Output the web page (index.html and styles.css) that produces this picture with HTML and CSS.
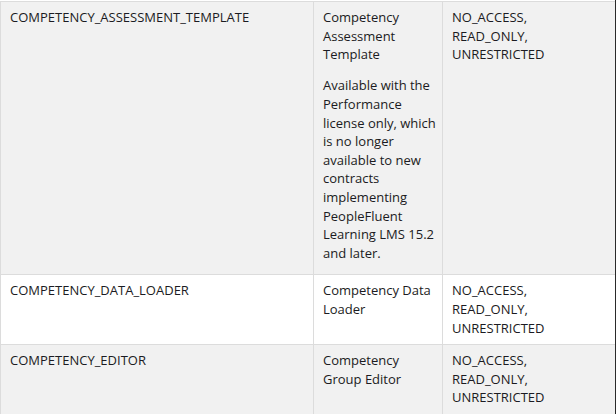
FILE: index.html
```html
<!DOCTYPE html>
<html>
<head>
<meta charset="utf-8">
<link rel="stylesheet" href="styles.css">
</head>
<body>
<div class="frame">
  <table class="perm-table">
    <colgroup>
      <col class="c1">
      <col class="c2">
      <col class="c3">
    </colgroup>
    <tbody>
      <tr class="row-alt">
        <td>COMPETENCY_ASSESSMENT_TEMPLATE</td>
        <td class="desc">
          <p class="para">Competency Assessment Template</p>
          <p class="para para-last">Available with the Performance license only, which is no longer available to new contracts implementing PeopleFluent Learning LMS 15.2 and later.</p>
        </td>
        <td>NO_ACCESS,<br>READ_ONLY,<br>UNRESTRICTED</td>
      </tr>
      <tr class="row-plain">
        <td>COMPETENCY_DATA_LOADER</td>
        <td class="desc">Competency Data Loader</td>
        <td>NO_ACCESS,<br>READ_ONLY,<br>UNRESTRICTED</td>
      </tr>
      <tr class="row-alt">
        <td>COMPETENCY_EDITOR</td>
        <td class="desc">Competency Group Editor</td>
        <td>NO_ACCESS,<br>READ_ONLY,<br>UNRESTRICTED</td>
      </tr>
    </tbody>
  </table>
</div>
</body>
</html>
```

FILE: styles.css
```css
html, body {
  margin: 0;
  padding: 0;
  background: #ffffff;
}

.frame {
  width: 615px;
  height: 414px;
  overflow: hidden;
  border-right: 1px solid #2a2a2a;
  padding-top: 1px;
  box-sizing: content-box;
}

.perm-table {
  border-collapse: collapse;
  table-layout: fixed;
  width: 700px;
  font-family: "Open Sans", "Liberation Sans", sans-serif;
  font-size: 13px;
  line-height: 18.6px;
  color: #1b1b22;
}

.c1 { width: 313px; }
.c2 { width: 129px; }
.c3 { width: 258px; }

.perm-table td {
  border: 1px solid #dcdcdc;
  padding: 6px 9px 7px 9px;
  vertical-align: top;
}

.perm-table td.desc {
  padding-right: 4px;
}

.row-alt td { background: #f1f1f1; }
.row-plain td { background: #ffffff; }

.para {
  margin: 0 0 12.6px 0;
}

.para-last {
  margin-bottom: 5px;
}
```
